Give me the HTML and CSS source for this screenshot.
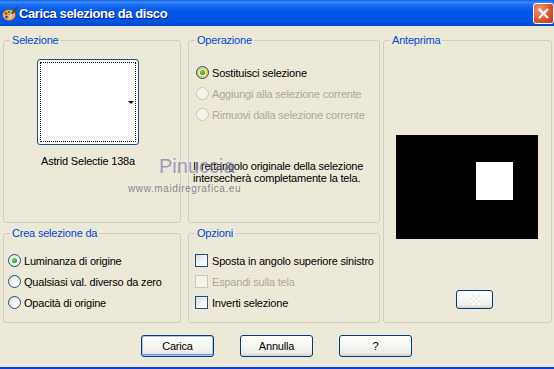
FILE: index.html
```html
<!DOCTYPE html>
<html>
<head>
<meta charset="utf-8">
<link rel="stylesheet" href="styles.css">
</head>
<body>
<div class="window">
  <div class="titlebar">
    <svg class="appicon" width="16" height="16" viewBox="0 0 16 16">
      <ellipse cx="7" cy="9" rx="6.5" ry="5.5" fill="#e8b070" stroke="#8a5a20" stroke-width="0.8"/>
      <circle cx="4" cy="7.5" r="1.3" fill="#e02020"/>
      <circle cx="7" cy="6" r="1.3" fill="#20a020"/>
      <circle cx="4.5" cy="11" r="1.3" fill="#2040e0"/>
      <circle cx="8" cy="12" r="1.1" fill="#f0e020"/>
      <path d="M15 1 L9 9" stroke="#604020" stroke-width="1.6"/>
      <path d="M10 8 L8 11" stroke="#d0d0d0" stroke-width="1.8"/>
    </svg>
    <span class="title">Carica selezione da disco</span>
    <div class="close">
      <svg width="13" height="13" viewBox="0 0 13 13"><path d="M2 2 L11 11 M11 2 L2 11" stroke="#fff" stroke-width="2.2"/></svg>
    </div>
  </div>
  <div class="client">
    <div class="groups">
      <div class="group g-sel">
        <div class="legend">Selezione</div>
        <div class="sel-body">
          <div class="thumb"><div class="thumb-inner"><span class="arrow"></span></div></div>
          <div class="thumb-label">Astrid Selectie 138a</div>
        </div>
      </div>
      <div class="group g-op">
        <div class="legend">Operazione</div>
        <div class="op-list">
          <div class="row"><span class="radio on"></span>Sostituisci selezione</div>
          <div class="row disabled"><span class="radio dis"></span>Aggiungi alla selezione corrente</div>
          <div class="row disabled"><span class="radio dis"></span>Rimuovi dalla selezione corrente</div>
        </div>
        <div class="info">Il rettangolo originale della selezione<br>intersecherà completamente la tela.</div>
      </div>
      <div class="group g-prev">
        <div class="legend">Anteprima</div>
        <div class="prev-body">
          <div class="preview"><div class="sq"></div></div>
          <div class="smallbtn"><span class="chk"></span></div>
        </div>
      </div>
      <div class="group g-crea">
        <div class="legend">Crea selezione da</div>
        <div class="opt-list">
          <div class="row"><span class="radio on"></span>Luminanza di origine</div>
          <div class="row"><span class="radio"></span>Qualsiasi val. diverso da zero</div>
          <div class="row"><span class="radio"></span>Opacità di origine</div>
        </div>
      </div>
      <div class="group g-opz">
        <div class="legend">Opzioni</div>
        <div class="opt-list">
          <div class="row"><span class="check"></span>Sposta in angolo superiore sinistro</div>
          <div class="row disabled"><span class="check dis"></span>Espandi sulla tela</div>
          <div class="row"><span class="check"></span>Inverti selezione</div>
        </div>
      </div>
    </div>
    <div class="buttons">
      <div class="btn default">Carica</div>
      <div class="btn">Annulla</div>
      <div class="btn">?</div>
    </div>
  </div>
  <div class="watermark">
    <div class="wm1">Pinuccia</div>
    <div class="wm2">www.maidiregrafica.eu</div>
  </div>
</div>
</body>
</html>
```

FILE: styles.css
```css
* { box-sizing: border-box; }
html, body { margin: 0; padding: 0; }
body { width: 554px; height: 369px; overflow: hidden; background: #ECE9D8; }
.window {
  position: relative;
  width: 554px; height: 369px;
  background: #ECE9D8;
  border-bottom: 2px solid #0841E0;
  font-family: "Liberation Sans", Arial, sans-serif;
  font-size: 11px;
  letter-spacing: -0.2px;
  color: #000;
  display: flex; flex-direction: column;
}
.titlebar {
  height: 26px;
  flex: none;
  display: flex; align-items: center;
  background: linear-gradient(to bottom, #0A5DE8 0%, #3D8AF7 8%, #1A6CF2 18%, #0058E8 45%, #0054E3 80%, #0048CF 100%);
  padding-left: 2px;
}
.appicon { flex: none; margin-top: 1px; }
.title {
  margin-left: 1px;
  color: #fff;
  font-family: "Liberation Sans", Arial, sans-serif;
  font-weight: bold;
  font-size: 13px;
  letter-spacing: -0.4px;
  text-shadow: 1px 1px 0 #0A1E8C;
  flex: 1;
}
.close {
  width: 21px; height: 21px;
  margin-top: 1px;
  border: 1px solid #fff;
  border-radius: 3px;
  background: radial-gradient(circle at 30% 30%, #EE9A7C 0%, #D9582F 55%, #B8330F 100%);
  display: flex; align-items: center; justify-content: center;
}
.client { flex: 1; padding: 14px 0 0 3px; display: flex; flex-direction: column; }
.groups {
  display: grid;
  grid-template-columns: 178px 199px 172px;
  grid-template-rows: 183px 90px;
  row-gap: 10px;
}
.group {
  border: 1px solid #D0D0BF;
  border-radius: 3px;
  display: flex; flex-direction: column;
}
.g-sel { grid-column: 1; grid-row: 1; }
.g-op { grid-column: 2; grid-row: 1; margin-left: 7px; }
.g-prev { grid-column: 3; grid-row: 1 / 3; margin-left: 3px; }
.g-crea { grid-column: 1; grid-row: 2; }
.g-opz { grid-column: 2; grid-row: 2; margin-left: 7px; }
.legend {
  align-self: flex-start;
  margin: -7px 0 0 6px;
  padding: 0 2px 0 2px;
  background: #ECE9D8;
  color: #0046D5;
  line-height: 13px;
  height: 13px;
}
.sel-body { display: flex; flex-direction: column; align-items: center; width: 168px; padding-top: 12px; }
.thumb {
  width: 102px; height: 86px;
  border: 1px solid #1C5180;
  border-radius: 3px;
  background: #fff;
  padding: 2px;
}
.thumb-inner {
  width: 100%; height: 100%;
  border: 1px dotted #000;
  display: flex; align-items: center; justify-content: flex-end;
  padding-right: 1px;
}
.arrow {
  width: 0; height: 0;
  border-left: 3px solid transparent;
  border-right: 3px solid transparent;
  border-top: 3px solid #000;
}
.thumb-label { margin-top: 10px; line-height: 13px; }
.row { display: flex; align-items: center; height: 21px; white-space: nowrap; }
.disabled { color: #ACA899; }
.radio {
  width: 13px; height: 13px; flex: none;
  border: 1px solid #1C5180;
  border-radius: 50%;
  background: radial-gradient(circle at 65% 65%, #FFFFFF 0%, #F4F3EE 40%, #DCD9CB 100%);
  margin-right: 3px;
  display: flex; align-items: center; justify-content: center;
}
.radio.on::after {
  content: "";
  width: 5px; height: 5px; border-radius: 50%;
  background: radial-gradient(circle at 40% 40%, #6EE05A 0%, #21A121 70%);
}
.g-op .radio.on { box-shadow: inset 0 0 0 2px #F9C858; }
.radio.dis { border-color: #CAC8BB; background: #F5F4EA; }
.check {
  width: 13px; height: 13px; flex: none;
  border: 1px solid #1C5180;
  background: linear-gradient(135deg, #DCDCD7 0%, #F5F5F1 60%, #FFFFFF 100%);
  margin-right: 4px;
}
.check.dis { border-color: #CAC8BB; background: #F5F4EA; }
.op-list { padding: 15px 0 0 7px; }
.info { margin: 35px 0 0 4px; line-height: 12px; }
.opt-list { padding: 10px 0 0 4px; }
.g-opz .opt-list { padding-left: 6px; }
.prev-body { flex: 1; display: flex; flex-direction: column; align-items: flex-start; padding: 88px 0 0 12px; }
.preview {
  width: 142px; height: 104px;
  background: #000;
  padding: 27px 0 0 80px;
}
.sq { width: 37px; height: 38px; background: #fff; }
.smallbtn {
  margin: 51px 0 0 60px;
  width: 37px; height: 19px;
  border: 1px solid #003C74;
  border-radius: 3px;
  background: linear-gradient(to bottom, #FFFFFF 0%, #F0F0EA 80%, #D6D0C5 100%);
  display: flex; align-items: center; justify-content: center;
}
.chk {
  width: 10px; height: 10px;
  background:
    linear-gradient(45deg, #E8E8E8 25%, transparent 25%, transparent 75%, #E8E8E8 75%),
    linear-gradient(45deg, #E8E8E8 25%, #FFFFFF 25%, #FFFFFF 75%, #E8E8E8 75%);
  background-size: 5px 5px;
  background-position: 0 0, 2.5px 2.5px;
}
.buttons { display: flex; gap: 26px; padding: 12px 0 0 138px; }
.btn {
  width: 73px; height: 22px;
  border: 1px solid #003C74;
  border-radius: 3px;
  background: linear-gradient(to bottom, #FFFFFF 0%, #F6F6F3 50%, #ECEBE6 85%, #D6D0C5 100%);
  display: flex; align-items: center; justify-content: center;
}
.btn.default { box-shadow: inset 0 0 0 1px #ADC8F5, inset 0 -1px 0 1px #6A92E0; }
.watermark {
  position: absolute;
  left: 128px; top: 155px;
  pointer-events: none;
  letter-spacing: 0;
}
.wm1 {
  margin-left: 31px;
  font-family: "Liberation Sans", Arial, sans-serif;
  font-size: 20px;
  color: rgba(120, 120, 175, 0.7);
  line-height: 22px;
}
.wm2 {
  font-family: "Liberation Sans", Arial, sans-serif;
  font-size: 10px;
  letter-spacing: 0.6px;
  color: rgba(85, 85, 105, 0.7);
  line-height: 12px;
  margin-top: 6px;
}
```
